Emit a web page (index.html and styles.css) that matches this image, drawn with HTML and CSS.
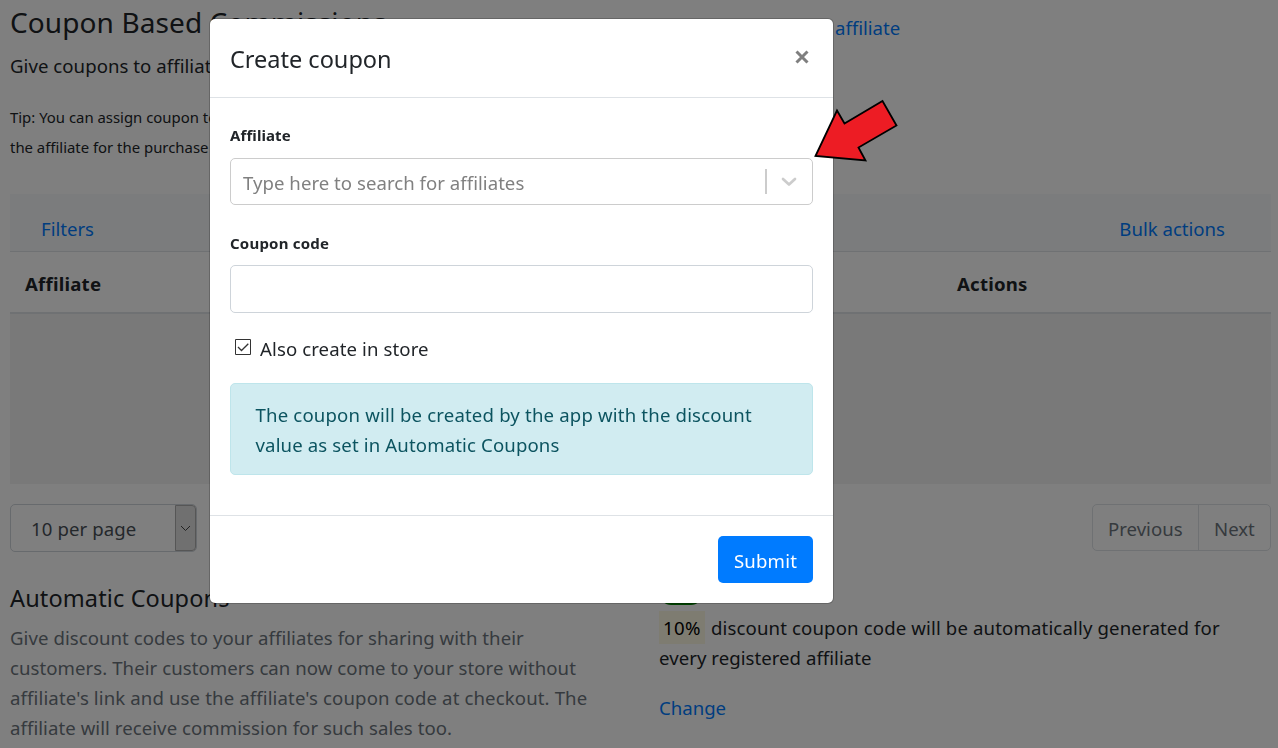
FILE: index.html
```html
<!DOCTYPE html>
<html lang="en">
<head>
<meta charset="utf-8">
<title>Coupon Based Commissions</title>
<link rel="stylesheet" href="styles.css">
</head>
<body>
<main class="page">
  <header class="page-head">
    <h1 class="page-title">Coupon Based Commissions</h1>
    <a class="link head-link">affiliate</a>
  </header>
  <p class="lead">Give coupons to affiliates</p>
  <p class="tip">Tip: You can assign coupon to<br>the affiliate for the purchase</p>
  <section class="table">
    <div class="toolbar"><a class="link filters">Filters</a><a class="link bulk">Bulk actions</a></div>
    <div class="table-head"><span class="col-affiliate">Affiliate</span><span class="col-actions">Actions</span></div>
    <div class="table-body"></div>
  </section>
  <div class="paging">
    <div class="select"><span class="select-value">10 per page</span><span class="select-arrow"><svg width="11" height="7" viewBox="0 0 11 7"><path d="M1 1l4.500 4.500L10 1" fill="none" stroke="#444" stroke-width="1"/></svg></span></div>
    <div class="pager"><span class="prev">Previous</span><span class="next">Next</span></div>
  </div>
  <section class="auto">
    <div class="auto-info">
      <h2 class="auto-title">Automatic Coupons</h2>
      <p class="muted">Give discount codes to your affiliates for sharing with their<br>customers. Their customers can now come to your store without<br><span class="muted-wide">affiliate's link and use the affiliate's coupon code at checkout. The</span><br>affiliate will receive commission for such sales too.</p>
    </div>
    <div class="auto-settings">
      <span class="toggle"></span>
      <p class="setting"><mark class="rate">10%</mark><span class="setting-text">discount coupon code will be automatically generated for</span><br><span class="setting-rest">every registered affiliate</span></p>
      <a class="link change">Change</a>
    </div>
  </section>
</main>
<div class="backdrop">
  <form class="modal">
    <div class="modal-head">
      <h2 class="modal-title">Create coupon</h2>
      <svg class="close" width="16" height="16" viewBox="0 0 16 16"><path d="M2.500 2.500l11 11M13.500 2.500l-11 11" fill="none" stroke="#7f7f7f" stroke-width="3"/></svg>
    </div>
    <div class="modal-body">
      <div class="label label-affiliate">Affiliate</div>
      <div class="search">
        <span class="placeholder">Type here to search for affiliates</span>
        <span class="divider"></span>
        <svg class="chevron" width="16" height="10" viewBox="0 0 16 10"><path d="M2 2l6 5.500L14 2" fill="none" stroke="#ccc" stroke-width="2.700" stroke-linecap="round" stroke-linejoin="round"/></svg>
      </div>
      <div class="label label-code">Coupon code</div>
      <div class="input"></div>
      <div class="check">
        <svg width="16" height="16" viewBox="0 0 16 16"><path d="M.5.5h15v15H.5z" fill="#fff" stroke="#333"/><path d="M3 8l3.500 3.500L13.300 4.700" fill="none" stroke="#333" stroke-width="1.300"/></svg>
        <span class="check-label">Also create in store</span>
      </div>
      <div class="alert"><span class="alert-one">The coupon will be created by the app with the discount</span><br><span class="alert-two">value as set in Automatic Coupons</span></div>
    </div>
    <div class="modal-foot"><span class="submit">Submit</span></div>
  </form>
</div>
<svg class="pointer" width="88" height="66" viewBox="812 98 88 66"><path d="M815.500 156L837 110.500L844.500 123.500L882.500 101L896.500 125.500L858.500 147.500L865.500 160.500Z" fill="#ed1c24" stroke="#000" stroke-width="1.800"/></svg>
</body>
</html>
```
FILE: styles.css
```css
* { box-sizing: border-box; }
body {
  margin: 0;
  height: 748px;
  overflow: hidden;
  background: #fff;
  color: #212529;
  font: 18.6px/30px "Noto Sans", "Open Sans", sans-serif;
  white-space: nowrap;
}
h1, h2, p { margin: 0; font-weight: 400; }
.link { color: #007bff; }
.page { padding: 4px 7px 0 10px; }
.page-head { display: flex; height: 47px; }
.page-title { width: 825px; font-size: 28px; line-height: 37px; letter-spacing: .1px; }
.head-link { line-height: 47px; }
.lead { letter-spacing: .05px; }
.tip { margin-top: 21px; font-size: 14.9px; }
.table { margin-top: 32px; }
.toolbar {
  display: flex;
  justify-content: space-between;
  height: 58px;
  padding: 20px 46px 0 31px;
  background: #f6f8fb;
  border-bottom: 1px solid #dee2e6;
}
.table-head {
  display: flex;
  height: 62px;
  padding: 17px 15px 0;
  border-bottom: 2px solid #dee2e6;
  font-weight: 700;
  letter-spacing: .22px;
}
.col-affiliate { width: 932px; }
.table-body { height: 170px; background: #f2f2f2; }
.paging { display: flex; justify-content: space-between; margin-top: 20px; }
.select {
  display: flex;
  justify-content: space-between;
  width: 187px;
  height: 48px;
  border: 1px solid #ced4da;
  border-radius: 5px;
  color: #495057;
}
.select-value { padding: 9px 0 0 20px; letter-spacing: .1px; }
.select-arrow {
  display: flex;
  align-items: center;
  justify-content: center;
  width: 21px;
  background: #e1e1e1;
  border: 1px solid #adadad;
  border-radius: 0 4px 4px 0;
}
.pager {
  display: flex;
  height: 47px;
  border: 1px solid #dee2e6;
  border-radius: 5px;
  color: #6c757d;
}
.prev { width: 106px; padding: 9px 0 0 15px; border-right: 1px solid #dee2e6; }
.next { width: 71px; padding: 9px 0 0 15px; }
.auto { display: flex; margin-top: 31px; }
.auto-info { width: 649px; }
.auto-title { height: 40px; font-size: 23.5px; letter-spacing: .13px; }
.muted { color: #6c757d; letter-spacing: .06px; }
.muted-wide { letter-spacing: .12px; }
.toggle { display: block; width: 42px; height: 22px; margin-left: 1px; background: green; border-radius: 11px; }
.setting { margin-top: 8px; }
.rate { margin-right: 6px; padding: 4px; background: #fcf8e3; letter-spacing: .4px; }
.setting-text { letter-spacing: .14px; }
.setting-rest { letter-spacing: .04px; }
.change { display: block; margin-top: 20px; }
.backdrop { position: fixed; inset: 0; background: rgba(0, 0, 0, .5); }
.modal {
  width: 625px;
  height: 586px;
  margin: 18px 0 0 209px;
  background: #fff;
  background-clip: padding-box;
  border: 1px solid rgba(0, 0, 0, .2);
  border-radius: 6px;
}
.modal-head {
  display: flex;
  justify-content: space-between;
  height: 79px;
  padding: 25px 23px 0 20px;
  border-bottom: 1px solid #dee2e6;
}
.modal-title { font-size: 23.5px; }
.close { margin-top: 5px; }
.modal-body { height: 417px; padding: 22px 20px 0; }
.label { height: 38px; font-size: 15px; font-weight: 700; letter-spacing: .1px; }
.search {
  display: flex;
  align-items: center;
  height: 47px;
  padding-left: 12px;
  border: 1px solid #ccc;
  border-radius: 5px;
  color: #808080;
}
.placeholder { width: 522px; padding-top: 2px; letter-spacing: .03px; }
.divider { width: 2px; height: 25px; background: #ccc; }
.chevron { margin: 1px 0 0 14px; }
.label-code { margin-top: 23px; height: 37px; letter-spacing: .22px; }
.input { height: 48px; border: 1px solid #ced4da; border-radius: 5px; }
.check { display: flex; gap: 9px; height: 30px; margin: 21px 0 19px 5px; letter-spacing: .1px; }
.check svg { margin-top: 5px; }
.alert {
  height: 92px;
  padding: 16px 24.500px;
  color: #0c5460;
  background: #d1ecf1;
  border: 1px solid #bee5eb;
  border-radius: 5px;
}
.alert-one { letter-spacing: .17px; }
.alert-two { letter-spacing: .13px; }
.modal-foot { display: flex; justify-content: flex-end; padding: 20px; border-top: 1px solid #dee2e6; }
.submit { width: 95px; height: 47px; padding-top: 10px; text-align: center; letter-spacing: .2px; color: #fff; background: #007bff; border-radius: 5px; }
.pointer { position: fixed; left: 812px; top: 98px; }
```
